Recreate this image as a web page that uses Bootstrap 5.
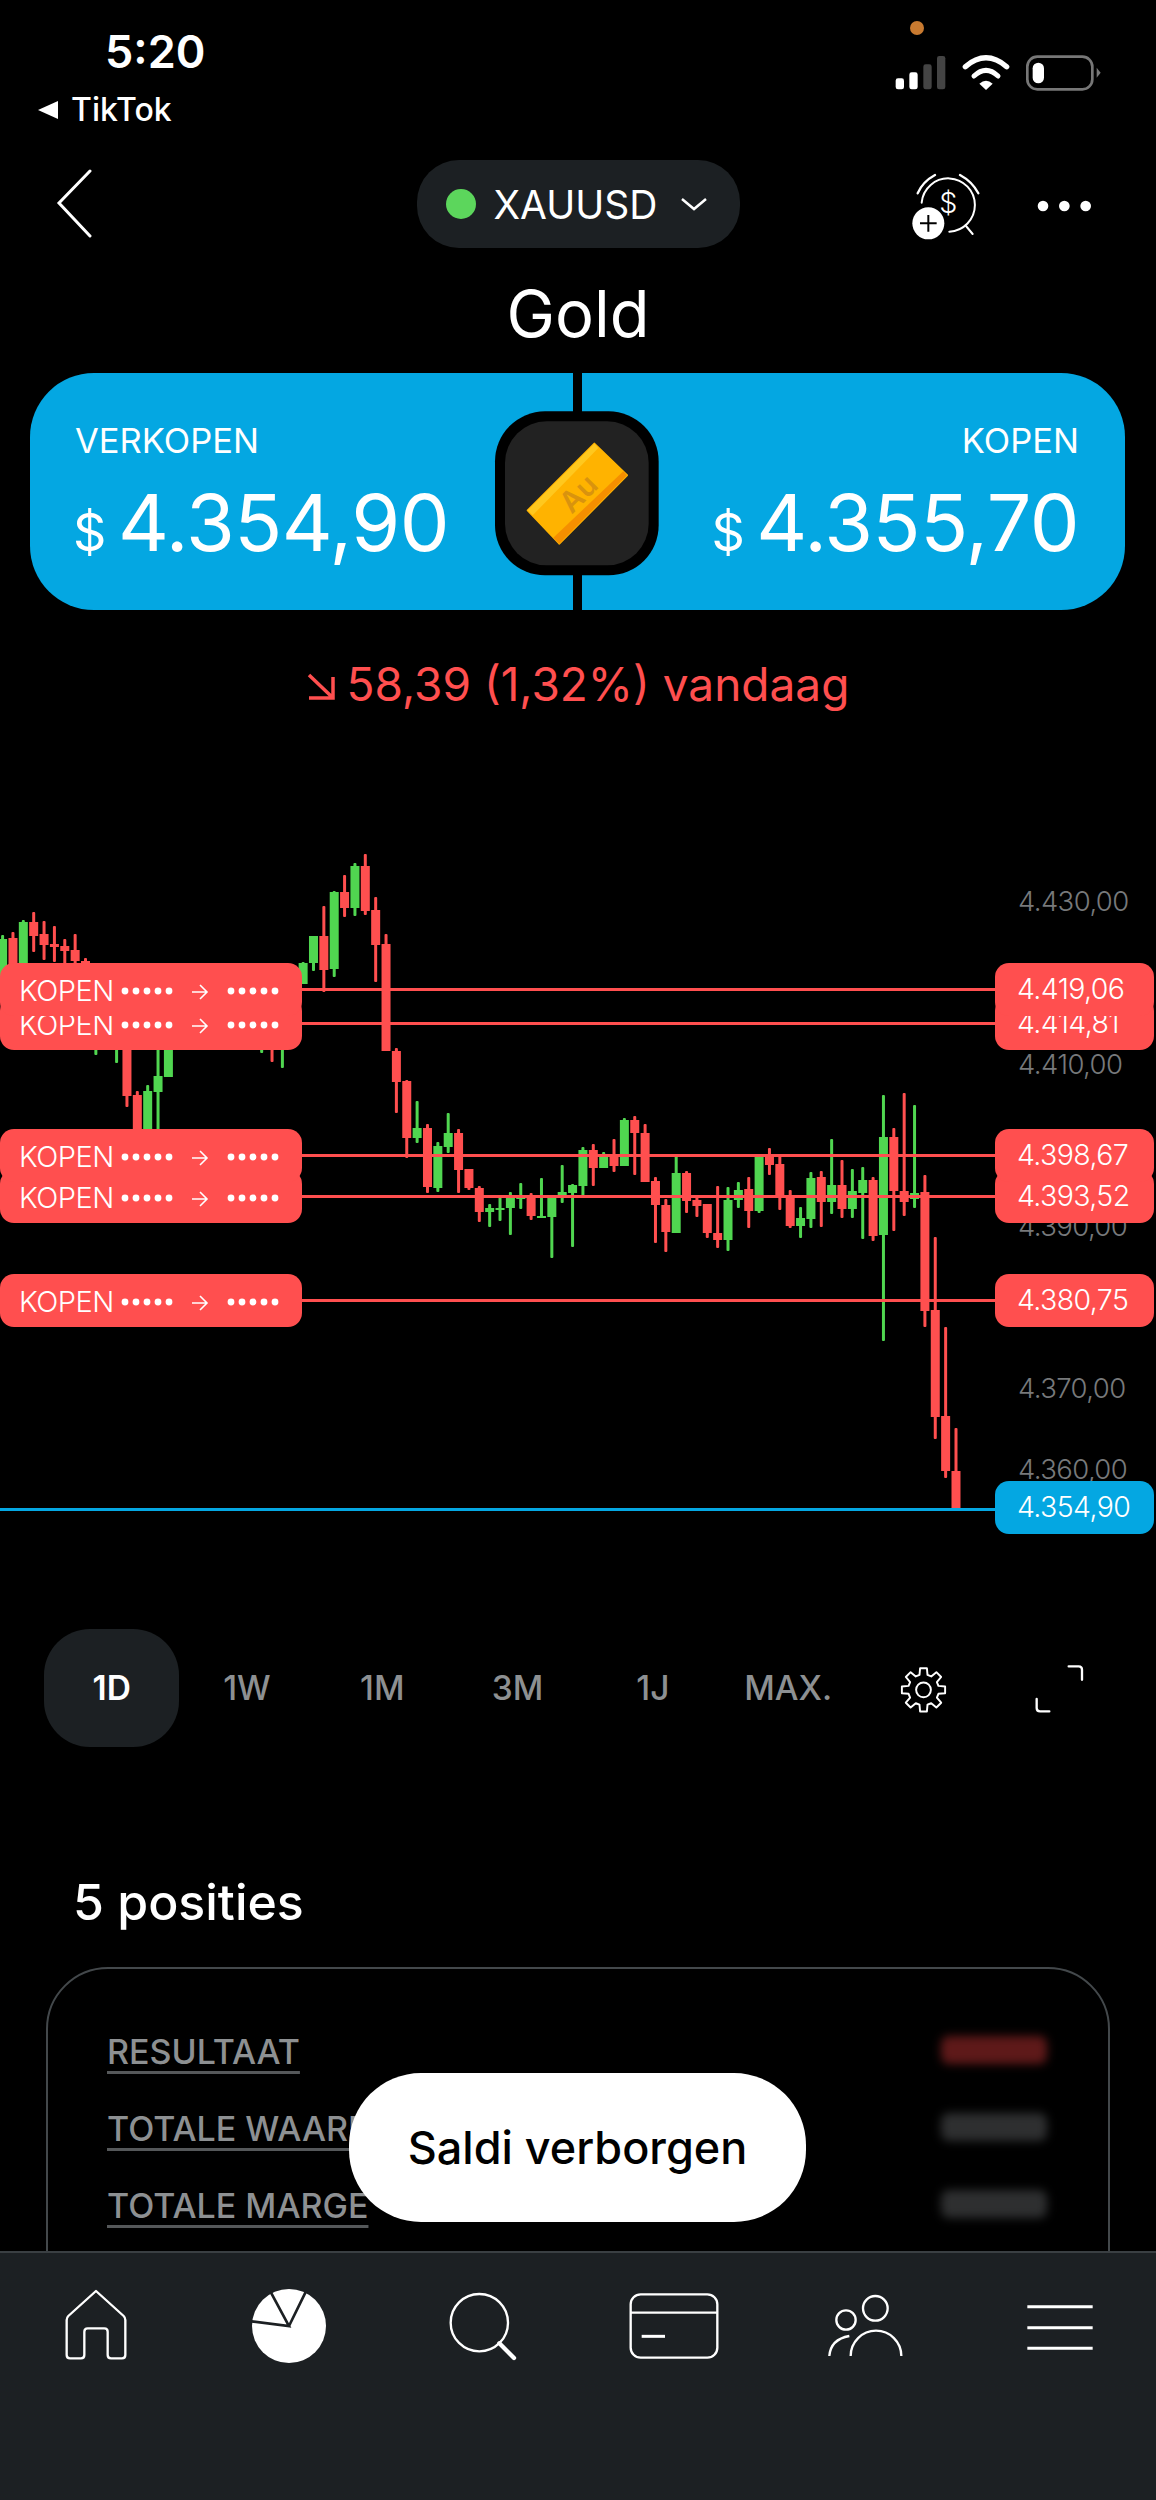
<!DOCTYPE html>
<html lang="nl">
<head>
    <meta charset="UTF-8">
    <meta name="viewport" content="width=device-width, initial-scale=1.0">
    <title>Gold</title>
    <link href="https://cdn.jsdelivr.net/npm/bootstrap@5.3.0/dist/css/bootstrap.min.css" rel="stylesheet">
    <style>
        body { background: #000; margin: 0; font-family: "Inter", "Liberation Sans", sans-serif; color: #fff; }
        .scherm { width: 1156px; height: 2500px; overflow: hidden; }
        .inhoud { height: 2251px; overflow: hidden; }

        .status-rij { height: 160px; }
        .status-links { padding: 24px 0 0 38px; }
        .klok { font-size: 45px; font-weight: 600; line-height: 56px; margin-left: 67px; }
        .terug-app { font-size: 32px; font-weight: 500; line-height: 36px; margin-top: 12px; }
        .terug-pijl { width: 0; height: 0; border-style: solid; border-width: 9px 20px 9px 0; border-color: transparent #fff transparent transparent; margin-right: 13px; }
        .status-iconen { margin: 20px 36px 0 0; }

        .kop-rij { display: grid; grid-template-columns: 1fr auto 1fr; height: 88px; }
        .terug-knop { margin-left: 54px; }
        .kop-acties { margin-right: 36px; }
        .symbool-pil { width: 323px; height: 88px; background: #1c2023; border-radius: 42px; padding-left: 29px; font-size: 39px; line-height: 1; }
        .live-stip { width: 30px; height: 30px; background: #5cd65c; border-radius: 50%; margin-right: 18px; }
        .pil-pijl { margin-left: 23px; }
        .titel-rij { height: 125px; padding-top: 5px; font-size: 65px; line-height: 1; margin: 0; font-weight: 400; }

        .prijs-blok { width: 1095px; height: 237px; margin-left: 30px; gap: 9px; }
        .prijs-helft { flex: 1; background: #04a7e2; padding: 48px 46px 0 43px; }
        .prijs-helft.links { border-radius: 64px 0 0 64px; }
        .prijs-helft.rechts { border-radius: 0 64px 64px 0; }
        .prijs-naam { font-size: 34.5px; line-height: 40px; margin-left: 2px; }
        .prijs-getal { font-size: 79px; line-height: 90px; margin-top: 16px; font-weight: 400; letter-spacing: -0.5px; }
        .prijs-teken { font-size: 52px; margin-right: 12px; }

        .wijziging { height: 190px; padding-top: 47px; color: #ff4f4f; font-size: 46px; line-height: 54px; gap: 12px; }
        .wijziging-pijl { margin-top: 14px; }

        .grafiek { height: 829px; overflow: hidden; }
        .grafiek svg.kaarsen { position: absolute; top: 0; left: 0; }
        .as-prijs { position: absolute; left: 1018px; font-size: 27.5px; font-weight: 300; line-height: 36px; color: #77797b; letter-spacing: -0.6px; }
        .orderlabel { position: absolute; left: 0; width: 302px; height: 53px; background: #ff4f4f; border-radius: 14px; padding: 2px 20px 0 19px; font-size: 29px; font-weight: 300; letter-spacing: -0.5px; }
        .prijslabel { position: absolute; left: 995px; width: 159px; height: 53px; background: #ff4f4f; border-radius: 14px; padding-left: 22px; font-size: 28.5px; font-weight: 300; letter-spacing: -0.6px; }
        .prijslabel.actueel { background: #04a7e2; }

        .periode-rij { height: 118px; padding-left: 44px; }
        .periode { width: 135.3px; height: 118px; padding: 0; border: 0; border-radius: 46px; color: #8d9092; font-size: 33.5px; font-weight: 500; }
        .periode.actief { background: #1c2023; color: #fff; font-weight: 600; }

        .posities-kop { font-size: 50px; font-weight: 500; line-height: 56px; margin: 127px 0 37px 73px; }
        .posities-kaart { width: 1064px; margin-left: 46px; height: 400px; border: 2px solid #43484b; border-radius: 62px; background: transparent; padding: 63px 61px 0 59px; }
        .posities-regel { height: 77px; }
        .posities-naam { font-size: 34px; font-weight: 500; line-height: 40px; color: #8d9092; text-decoration: underline; text-decoration-color: #55585a; text-decoration-thickness: 3px; text-underline-offset: 7px; }
        .verborgen { width: 106px; height: 28px; border-radius: 8px; background: #2e2f30; filter: blur(5px); margin-top: 4px; }
        .verborgen.rood { background: #5e1919; }

        .melding { position: absolute; left: 349px; top: 2073px; width: 457px; height: 149px; border-radius: 72px; background: #fff; color: #000; font-size: 45px; font-weight: 500; }

        .onderbalk { height: 249px; background: #1c2023; border-top: 2px solid #3a3f42; padding-top: 27px; align-items: flex-start; }
    </style>
</head>
<body>
<div class="scherm position-relative">
    <div class="inhoud">
        <!-- statusbalk -->
        <div class="status-rij d-flex justify-content-between">
            <div class="status-links">
                <div class="klok">5:20</div>
                <div class="terug-app d-flex align-items-center"><span class="terug-pijl"></span>TikTok</div>
            </div>
            <svg class="status-iconen" width="240" height="80" viewBox="0 0 720 240">
                <circle cx="111" cy="24" r="21" fill="#c87a30"/>
                <g transform="translate(0 60)">
                    <rect x="47" y="115" width="25" height="33" rx="7" fill="#fff"/>
                    <rect x="88" y="97" width="25" height="51" rx="7" fill="#fff"/>
                    <rect x="130" y="73" width="25" height="75" rx="7" fill="#444"/>
                    <rect x="171" y="48" width="25" height="100" rx="7" fill="#444"/>
                    <path d="M256 80 Q318 27 380 80" fill="none" stroke="#fff" stroke-width="16" stroke-linecap="round"/>
                    <path d="M282 108 Q318 74 354 108" fill="none" stroke="#fff" stroke-width="15" stroke-linecap="round"/>
                    <path d="M298 131 Q318 113 338 131 L318 150 Z" fill="#fff"/>
                    <rect x="442" y="50" width="195" height="98" rx="30" fill="none" stroke="#777" stroke-width="8"/>
                    <rect x="458" y="68" width="34" height="62" rx="17" fill="#fff"/>
                    <path d="M650 83 L662 98 L650 113 Z" fill="#777"/>
                </g>
            </svg>
        </div>

        <!-- kop -->
        <div class="kop-rij align-items-center">
            <svg class="terug-knop" width="40" height="70" viewBox="0 0 40 70" fill="none" stroke="#fff" stroke-width="3" stroke-linecap="round">
                <path d="M36 2 L5 34 L36 67"/>
            </svg>
            <div class="symbool-pil d-flex align-items-center">
                <span class="live-stip"></span>
                <span>XAUUSD</span>
                <svg class="pil-pijl" width="28" height="14" viewBox="0 0 28 14" fill="none" stroke="#fff" stroke-width="2.5"><path d="M2 2 L14 12 L26 2"/></svg>
            </div>
            <svg class="kop-acties ms-auto" width="240" height="88" viewBox="0 30 720 264" fill="none" stroke="#fff" stroke-linecap="round">
                <path d="M113 130 Q128 95 165 75 M240 75 Q277 95 295 130" stroke-width="7"/>
                <path d="M125 158 A80 80 0 1 1 208 245" stroke-width="6"/>
                <path d="M258 228 L278 252" stroke-width="6"/>
                <text x="205" y="190" font-size="86" font-weight="300" text-anchor="middle" fill="#fff" stroke="none">$</text>
                <circle cx="145" cy="220" r="56" fill="#000" stroke="none"/>
                <circle cx="145" cy="220" r="48" fill="#fff" stroke="none"/>
                <path d="M145 195 V245 M120 220 H170" stroke="#000" stroke-width="6" stroke-linecap="butt"/>
                <g fill="#fff" stroke="none"><circle cx="489" cy="168" r="16"/><circle cx="553" cy="168" r="16"/><circle cx="617" cy="168" r="16"/></g>
            </svg>
        </div>

        <h1 class="titel-rij d-flex align-items-center justify-content-center">Gold</h1>

        <!-- verkopen / kopen -->
        <div class="prijs-blok d-flex position-relative">
            <div class="prijs-helft links">
                <div class="prijs-naam">VERKOPEN</div>
                <div class="prijs-getal"><span class="prijs-teken">$</span>4.354,90</div>
            </div>
            <div class="prijs-helft rechts text-end">
                <div class="prijs-naam">KOPEN</div>
                <div class="prijs-getal"><span class="prijs-teken">$</span>4.355,70</div>
            </div>
            <svg class="position-absolute top-50 start-50 translate-middle" width="200" height="200" viewBox="-4 0 600 600">
                <rect x="47" y="58" width="491" height="492" rx="150" fill="#000"/>
                <rect x="77" y="88" width="431" height="432" rx="125" fill="#222"/>
                <path d="M345 155 L443 250 L240 455 L145 355 Z" fill="#ffb300" stroke="#ffb300" stroke-width="6" stroke-linejoin="round"/>
                <path d="M443 250 L240 455 L222 437 L432 238 Z" fill="#f58f00"/>
                <path d="M345 155 L145 355 L160 370 L357 168 Z" fill="#ffc81e"/>
                <text x="298" y="335" font-size="88" font-weight="600" text-anchor="middle" fill="#d9930e" transform="rotate(-45 298 305)">Au</text>
            </svg>
        </div>

        <div class="wijziging d-flex justify-content-center">
            <svg class="wijziging-pijl" width="28" height="30" viewBox="0 0 28 30" fill="none" stroke="#ff4f4f" stroke-width="3.5"><path d="M2 4 L25 26 M2 27 H26 V6"/></svg>
            <span>58,39 (1,32%) vandaag</span>
        </div>

        <!-- grafiek: coordinaten in px van de schermafbeelding, y start op 800 -->
        <div id="grafiek" class="grafiek position-relative">
            <svg id="kaarsen" class="kaarsen" width="1156" height="829" viewBox="0 800 1156 829"></svg>
        </div>

        <div class="periode-rij d-flex align-items-center">
            <button class="btn periode actief">1D</button>
            <button class="btn periode">1W</button>
            <button class="btn periode">1M</button>
            <button class="btn periode">3M</button>
            <button class="btn periode">1J</button>
            <button class="btn periode">MAX.</button>
            <button class="btn periode">
                <svg width="47" height="46" viewBox="52 40 146 143" fill="none" stroke="#fff" stroke-width="6" stroke-linejoin="round">
                    <path id="tandwiel"/>
                    <circle cx="125" cy="111" r="23"/>
                </svg>
            </button>
            <button class="btn periode">
                <svg width="50" height="50" viewBox="456 40 150 150" fill="none" stroke="#fff" stroke-width="7" stroke-linecap="round">
                    <path d="M560 47 H590 Q600 47 600 57 V87 M464 145 V172 Q464 182 474 182 H502"/>
                </svg>
            </button>
        </div>

        <h2 class="posities-kop">5 posities</h2>

        <div class="card posities-kaart">
            <div class="posities-regel d-flex justify-content-between align-items-start">
                <span class="posities-naam">RESULTAAT</span><span class="verborgen rood"></span>
            </div>
            <div class="posities-regel d-flex justify-content-between align-items-start">
                <span class="posities-naam">TOTALE WAARDE</span><span class="verborgen"></span>
            </div>
            <div class="posities-regel d-flex justify-content-between align-items-start">
                <span class="posities-naam">TOTALE MARGE</span><span class="verborgen"></span>
            </div>
        </div>
    </div>

    <div class="melding d-flex align-items-center justify-content-center">Saldi verborgen</div>

    <!-- navigatie onderaan -->
    <nav class="nav nav-justified onderbalk">
        <a class="nav-item nav-link p-0" href="#">
            <svg width="96" height="90" viewBox="-34 0 288 270" fill="none" stroke="#fff" stroke-width="7" stroke-linejoin="round"><path d="M110 33 L193 108 Q198 113 198 120 V225 Q198 235 188 235 H155 Q145 235 145 225 V155 Q145 145 135 145 H85 Q75 145 75 155 V225 Q75 235 65 235 H32 Q22 235 22 225 V120 Q22 113 27 108 Z"/></svg>
        </a>
        <a class="nav-item nav-link p-0" href="#">
            <svg width="96" height="90" viewBox="544 0 288 270"><circle cx="688" cy="138" r="111" fill="#fff"/><path d="M575 124 L688 138 L634 38 M688 138 L740 32" fill="none" stroke="#1c2023" stroke-width="8"/></svg>
        </a>
        <a class="nav-item nav-link p-0" href="#">
            <svg width="96" height="90" viewBox="1122 0 288 270" fill="none" stroke="#fff"><circle cx="1258" cy="128" r="86" stroke-width="7"/><path d="M1318 190 L1362 234" stroke-width="13" stroke-linecap="round"/></svg>
        </a>
        <a class="nav-item nav-link p-0" href="#">
            <svg width="96" height="90" viewBox="19 0 288 270" fill="none" stroke="#fff" stroke-width="7"><rect x="33" y="43" width="260" height="190" rx="30"/><path d="M33 98 H293"/><path d="M66 169 H136" stroke-width="9"/></svg>
        </a>
        <a class="nav-item nav-link p-0" href="#">
            <svg width="96" height="90" viewBox="597 0 288 270" fill="none" stroke="#fff" stroke-width="7"><circle cx="766" cy="85" r="37"/><circle cx="678" cy="120" r="29"/><path d="M692 228 A76 76 0 0 1 844 228"/><path d="M628 228 Q632 178 688 168"/></svg>
        </a>
        <a class="nav-item nav-link p-0" href="#">
            <svg width="96" height="90" viewBox="1174 0 288 270" fill="none" stroke="#fff" stroke-width="9"><path d="M1220 80 H1416 M1220 143 H1416 M1220 205 H1416"/></svg>
        </a>
    </nav>
</div>

<script src="https://cdn.jsdelivr.net/npm/bootstrap@5.3.0/dist/js/bootstrap.bundle.min.js"></script>
<script>
    // kaarsen: [wiek boven, lijf boven, lijf onder, wiek onder, kleur]
    const kaarsen = [
        [935,939,990,1000,'g'],[932,938,990,1000,'r'],[920,922,990,1000,'g'],[912,922,936,952,'r'],[921,934,945,960,'r'],
        [926,944,947,962,'r'],[939,946,951,965,'r'],[934,950,961,967,'r'],[958,961,985,990,'r'],[1000,1010,1040,1055,'g'],
        [990,1000,1030,1040,'r'],[1000,1010,1040,1063,'g'],[1000,1020,1096,1107,'r'],[1091,1095,1135,1135,'r'],[1085,1091,1135,1135,'g'],
        [1040,1076,1092,1135,'g'],[1020,1030,1077,1077,'g'],[1000,1010,1030,1040,'r'],[1000,1010,1030,1040,'g'],[1000,1010,1030,1040,'r'],
        [1000,1010,1030,1040,'g'],[1000,1010,1030,1040,'r'],[1000,1010,1030,1040,'g'],[1000,1010,1030,1040,'r'],[1000,1010,1030,1040,'g'],
        [1000,1010,1030,1053,'g'],[1000,1010,1030,1062,'r'],[1000,1010,1030,1068,'g'],[990,1000,1030,1040,'g'],[962,963,984,984,'g'],
        [936,936,963,971,'g'],[906,936,970,992,'r'],[891,892,969,977,'g'],[875,892,908,917,'r'],[863,866,908,916,'g'],
        [854,866,911,915,'r'],[897,910,945,982,'r'],[934,944,1051,1051,'r'],[1048,1051,1082,1113,'r'],[1080,1081,1138,1158,'r'],
        [1101,1128,1138,1143,'g'],[1124,1128,1187,1193,'r'],[1142,1146,1188,1192,'g'],[1113,1133,1147,1153,'g'],[1129,1133,1170,1193,'r'],
        [1169,1169,1188,1190,'r'],[1186,1188,1212,1222,'r'],[1204,1208,1212,1227,'g'],[1197,1208,1209,1221,'g'],[1192,1196,1208,1235,'g'],
        [1183,1197,1198,1209,'g'],[1193,1195,1216,1220,'r'],[1178,1216,1217,1218,'g'],[1196,1197,1217,1258,'g'],[1165,1192,1197,1203,'g'],
        [1184,1185,1193,1247,'g'],[1147,1150,1186,1198,'g'],[1144,1150,1168,1186,'r'],[1152,1155,1168,1168,'g'],[1139,1155,1166,1172,'r'],
        [1118,1120,1166,1166,'g'],[1116,1120,1133,1175,'r'],[1124,1133,1182,1182,'r'],[1177,1181,1205,1243,'r'],[1199,1205,1232,1252,'r'],
        [1156,1173,1233,1233,'g'],[1171,1173,1201,1213,'r'],[1197,1200,1206,1217,'r'],[1204,1204,1233,1238,'r'],[1186,1233,1240,1248,'r'],
        [1187,1200,1240,1251,'g'],[1182,1190,1200,1208,'g'],[1177,1189,1211,1228,'r'],[1156,1157,1211,1213,'g'],[1148,1154,1165,1175,'r'],
        [1156,1164,1198,1210,'r'],[1190,1198,1226,1228,'r'],[1207,1218,1226,1238,'g'],[1172,1178,1219,1228,'g'],[1171,1177,1202,1227,'r'],
        [1139,1185,1202,1214,'g'],[1160,1185,1209,1218,'r'],[1169,1191,1209,1218,'g'],[1167,1180,1193,1239,'g'],[1177,1180,1236,1241,'r'],
        [1095,1137,1235,1341,'g'],[1128,1137,1191,1231,'r'],[1093,1191,1202,1216,'r'],[1105,1193,1199,1208,'g'],[1175,1192,1311,1327,'r'],
        [1237,1310,1417,1439,'r'],[1327,1416,1471,1478,'r'],[1428,1471,1508,1508,'r']
    ];
    const orders = [
        { y: 989, prijs: '4.419,06' },
        { y: 1023, prijs: '4.414,81' },
        { y: 1155, prijs: '4.398,67' },
        { y: 1196, prijs: '4.393,52' },
        { y: 1300, prijs: '4.380,75' }
    ];
    const asPrijzen = [[901, '4.430,00'], [1064, '4.410,00'], [1226, '4.390,00'], [1388, '4.370,00'], [1469, '4.360,00']];

    let svg = '';
    kaarsen.forEach(function (k, i) {
        const x = 2.6 + 10.363 * i;
        const kleur = k[4] === 'g' ? '#50d650' : '#ff4f4f';
        svg += `<rect x="${x - 1.5}" y="${k[0]}" width="3" height="${k[3] - k[0]}" rx="1" fill="${kleur}"/>`;
        svg += `<rect x="${x - 4.5}" y="${k[1]}" width="9" height="${Math.max(k[2] - k[1], 2)}" fill="${kleur}"/>`;
    });
    orders.forEach(function (o) {
        svg += `<rect x="0" y="${o.y - 1}" width="1000" height="3" fill="#ff4f4f"/>`;
    });
    svg += '<rect x="0" y="1508" width="1000" height="3" fill="#04a7e2"/>';
    document.getElementById('kaarsen').innerHTML = svg;

    const stipjes = `<svg width="162" height="24" viewBox="0 0 162 24">
        <g fill="#fff"><circle cx="5" cy="12" r="3.4"/><circle cx="16" cy="12" r="3.4"/><circle cx="27" cy="12" r="3.4"/><circle cx="38" cy="12" r="3.4"/><circle cx="49" cy="12" r="3.4"/>
        <circle cx="111" cy="12" r="3.4"/><circle cx="122" cy="12" r="3.4"/><circle cx="133" cy="12" r="3.4"/><circle cx="144" cy="12" r="3.4"/><circle cx="155" cy="12" r="3.4"/></g>
        <path d="M72 13 H87 M80 6 L87 13 L80 20" fill="none" stroke="#fff" stroke-width="1.6"/></svg>`;

    let html = '';
    asPrijzen.forEach(function (a) {
        html += `<div class="as-prijs" style="top:${a[0] - 818}px">${a[1]}</div>`;
    });
    // de bovenste order ligt over de volgende, dus omgekeerd tekenen
    orders.slice().reverse().forEach(function (o) {
        const top = o.y - 826;
        html += `<div class="orderlabel d-flex align-items-center justify-content-between" style="top:${top}px"><span>KOPEN</span>${stipjes}</div>`;
        html += `<div class="prijslabel d-flex align-items-center" style="top:${top}px">${o.prijs}</div>`;
    });
    html += '<div class="prijslabel actueel d-flex align-items-center" style="top:681px">4.354,90</div>';
    document.getElementById('grafiek').insertAdjacentHTML('beforeend', html);

    // tandwiel met 8 tanden
    let punten = [];
    for (let t = 0; t < 8; t++) {
        const a = t * 45;
        [[48, -15], [68, -9], [68, 9], [48, 15]].forEach(function (p) {
            const rad = (a + p[1]) * Math.PI / 180;
            punten.push((125 + p[0] * Math.sin(rad)).toFixed(1) + ' ' + (111 - p[0] * Math.cos(rad)).toFixed(1));
        });
    }
    document.getElementById('tandwiel').setAttribute('d', 'M' + punten.join(' L') + ' Z');
</script>
</body>
</html>
